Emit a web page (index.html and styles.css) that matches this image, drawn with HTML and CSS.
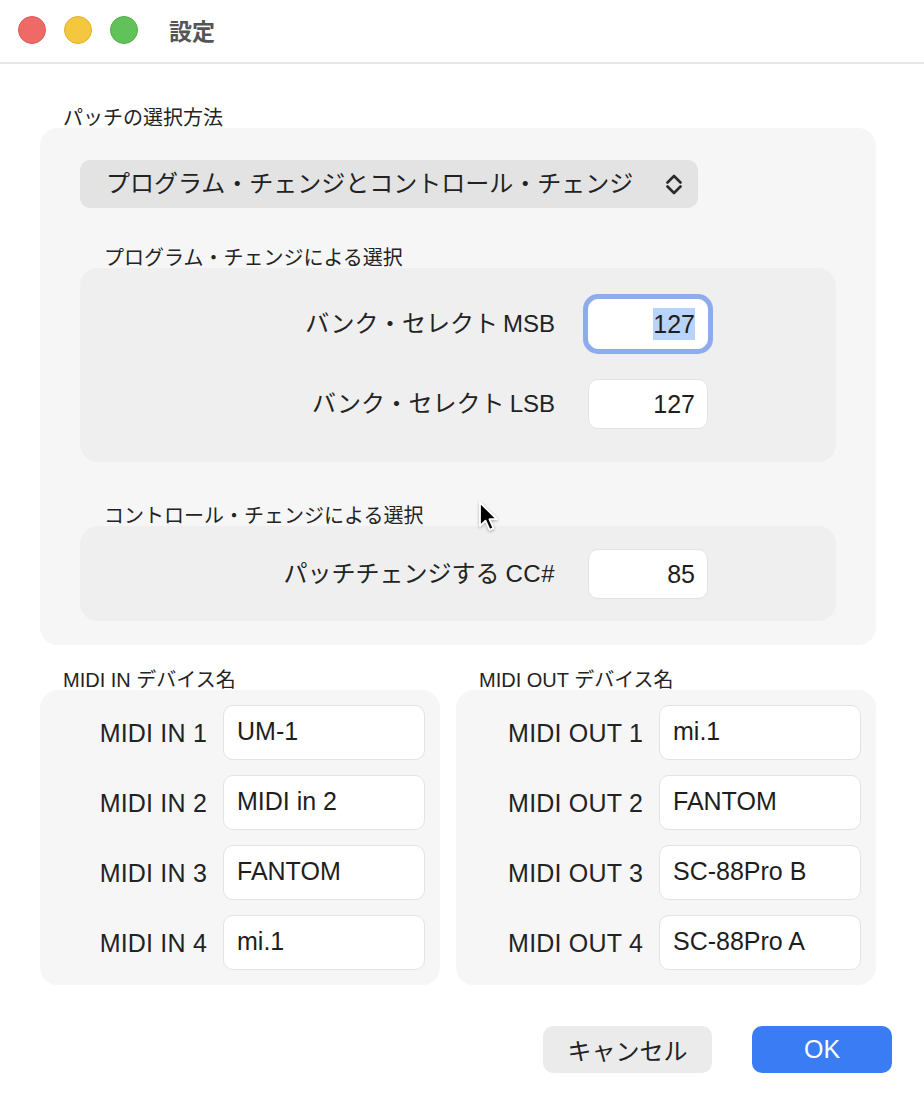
FILE: index.html
```html
<!DOCTYPE html>
<html lang="ja">
<head>
<meta charset="utf-8">
<title>設定</title>
<link rel="stylesheet" href="styles.css">
</head>
<body>
<div class="window">
  <header class="titlebar">
    <div class="lights">
      <span class="light red"></span>
      <span class="light yellow"></span>
      <span class="light green"></span>
    </div>
    <h1 class="title">設定</h1>
  </header>

  <main class="content">
    <div class="group-label">パッチの選択方法</div>
    <section class="panel">
      <div class="popup">
        <span class="popup-text">プログラム・チェンジとコントロール・チェンジ</span>
        <svg class="chevrons" width="16" height="21" viewBox="0 0 16 21" aria-hidden="true">
          <path d="M1.5 8.5 L8 2 L14.5 8.5" fill="none" stroke="#2a2a2a" stroke-width="2.6" stroke-linecap="round" stroke-linejoin="round"/>
          <path d="M1.5 12.5 L8 19 L14.5 12.5" fill="none" stroke="#2a2a2a" stroke-width="2.6" stroke-linecap="round" stroke-linejoin="round"/>
        </svg>
      </div>

      <div class="sub-label">プログラム・チェンジによる選択</div>
      <div class="inner inner-pc">
        <div class="row-label">バンク・セレクト<span class="latin">MSB</span></div>
        <div class="field num focused"><span class="selection">127</span></div>
        <div class="row-label">バンク・セレクト<span class="latin">LSB</span></div>
        <div class="field num">127</div>
      </div>

      <div class="sub-label sub-label-cc">コントロール・チェンジによる選択</div>
      <div class="inner inner-cc">
        <div class="row-label">パッチチェンジする<span class="latin wide">CC#</span></div>
        <div class="field num">85</div>
      </div>
    </section>

    <div class="devices">
      <div class="device-col">
        <div class="group-label">MIDI IN デバイス名</div>
        <div class="device-panel device-in">
          <div class="dev-label">MIDI IN 1</div><div class="field dev-field">UM-1</div>
          <div class="dev-label">MIDI IN 2</div><div class="field dev-field">MIDI in 2</div>
          <div class="dev-label">MIDI IN 3</div><div class="field dev-field">FANTOM</div>
          <div class="dev-label">MIDI IN 4</div><div class="field dev-field">mi.1</div>
        </div>
      </div>
      <div class="device-col">
        <div class="group-label">MIDI OUT デバイス名</div>
        <div class="device-panel device-out">
          <div class="dev-label">MIDI OUT 1</div><div class="field dev-field">mi.1</div>
          <div class="dev-label">MIDI OUT 2</div><div class="field dev-field">FANTOM</div>
          <div class="dev-label">MIDI OUT 3</div><div class="field dev-field">SC-88Pro B</div>
          <div class="dev-label">MIDI OUT 4</div><div class="field dev-field">SC-88Pro A</div>
        </div>
      </div>
    </div>

    <div class="buttons">
      <button class="btn btn-cancel" type="button">キャンセル</button>
      <button class="btn btn-ok" type="button">OK</button>
    </div>
  </main>

  <svg class="cursor" width="22" height="34" viewBox="0 0 22 34" aria-hidden="true">
    <path d="M2 1.5 L2 25 L7.5 19.6 L11.6 28.8 L15.4 27.2 L11.4 18.2 L18.8 18.2 Z" fill="#000" stroke="#fff" stroke-width="1.8" stroke-linejoin="round"/>
  </svg>
</div>
</body>
</html>
```

FILE: styles.css
```css
* {
  box-sizing: border-box;
}

html, body {
  margin: 0;
  padding: 0;
  background: #ffffff;
}

body {
  font-family: "Liberation Sans", "Noto Sans CJK JP", sans-serif;
  color: #232323;
}

.window {
  position: relative;
  width: 924px;
  height: 1106px;
  overflow: hidden;
  background: #ffffff;
}

/* Title bar */
.titlebar {
  height: 64px;
  display: flex;
  align-items: center;
  padding-left: 18px;
  border-bottom: 2px solid #e6e6e6;
}

.lights {
  display: flex;
  gap: 18px;
  margin-top: -2px;
}

.light {
  width: 28px;
  height: 28px;
  border-radius: 50%;
  display: block;
}

.red {
  background: #ee6a66;
  border: 1px solid #dc5753;
}

.yellow {
  background: #f4c73f;
  border: 1px solid #e0b02c;
}

.green {
  background: #62c25a;
  border: 1px solid #50ad48;
}

.title {
  margin: -2px 0 0 31px;
  font-size: 23px;
  font-weight: bold;
  color: #555555;
  line-height: 28px;
  font-family: "Noto Sans CJK JP", sans-serif;
}

/* Content */
.content {
  padding: 44px 32px 0 40px;
}

.group-label {
  font-size: 20px;
  line-height: 20px;
  height: 20px;
  padding-left: 23px;
  color: #232323;
  white-space: nowrap;
}

.panel {
  margin-right: 16px;
  background: #f6f6f6;
  border-radius: 18px;
  padding: 32px 40px 24px 40px;
}

.popup {
  width: 618px;
  height: 48px;
  background: #e3e3e3;
  border-radius: 10px;
  display: flex;
  align-items: center;
  justify-content: space-between;
  padding: 0 16px 0 26px;
}

.popup-text {
  font-size: 24px;
  color: #222222;
  line-height: 28px;
}

.chevrons {
  display: block;
}

.sub-label {
  margin-top: 40px;
  font-size: 20px;
  line-height: 20px;
  height: 20px;
  padding-left: 24px;
  color: #232323;
}

.sub-label-cc {
  margin-top: 44px;
}

.inner {
  background: #efefef;
  border-radius: 18px;
  display: grid;
  grid-template-columns: 475px 120px;
  column-gap: 33px;
  align-items: center;
}

.inner-pc {
  padding: 31px 0 33px 0;
  row-gap: 30px;
}

.inner-cc {
  padding: 23px 0 22px 0;
}

.row-label {
  text-align: right;
  font-size: 24px;
  line-height: 28px;
  white-space: nowrap;
  color: #232323;
}

.latin {
  margin-left: 5px;
}

.latin.wide {
  margin-left: 6px;
  letter-spacing: 0.5px;
}

.field {
  background: #ffffff;
  border: 1px solid #e3e3e3;
  border-radius: 10px;
  font-size: 25px;
  color: #1e1e1e;
  display: flex;
  align-items: center;
  white-space: nowrap;
}

.num {
  height: 50px;
  justify-content: flex-end;
  padding-right: 12px;
}

.focused {
  border-color: #ffffff;
  box-shadow: 0 0 0 5px #8caced;
}

.selection {
  background: #b8d4fa;
  line-height: 32px;
}

/* Devices */
.devices {
  margin-top: 25px;
  margin-right: 16px;
  display: grid;
  grid-template-columns: 400px 420px;
  column-gap: 16px;
}

.device-panel {
  background: #f6f6f6;
  border-radius: 18px;
  display: grid;
  column-gap: 16px;
  row-gap: 15px;
  padding: 15px 15px 15px 0;
  align-items: center;
}

.device-in {
  grid-template-columns: 167px 202px;
}

.device-out {
  grid-template-columns: 187px 202px;
}

.dev-label {
  text-align: right;
  font-size: 25px;
  line-height: 28px;
  white-space: nowrap;
  color: #232323;
  letter-spacing: 0.2px;
}

.dev-field {
  height: 55px;
  padding-left: 13px;
  padding-bottom: 2px;
}

/* Buttons */
.buttons {
  margin-top: 41px;
  display: flex;
  justify-content: flex-end;
  gap: 40px;
}

.btn {
  height: 47px;
  border: none;
  border-radius: 10px;
  font-family: "Liberation Sans", "Noto Sans CJK JP", sans-serif;
  font-size: 24px;
  padding: 0;
  cursor: default;
}

.btn-cancel {
  width: 169px;
  background: #ebebeb;
  color: #222222;
}

.btn-ok {
  width: 140px;
  background: #3a7cf4;
  color: #ffffff;
  font-size: 25px;
}

/* Pointer overlay */
.cursor {
  position: absolute;
  left: 478px;
  top: 501px;
  filter: drop-shadow(0 1px 1.5px rgba(0, 0, 0, 0.3));
}
```
